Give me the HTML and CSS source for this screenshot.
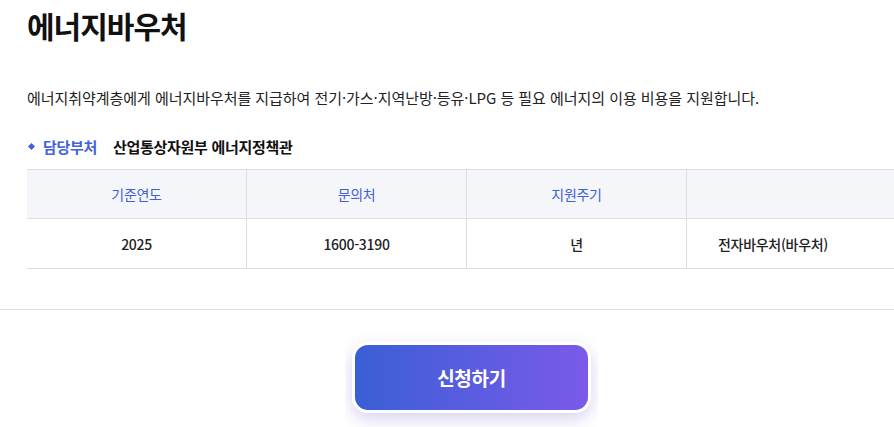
FILE: index.html
```html
<!DOCTYPE html>
<html lang="ko">
<head>
    <meta charset="UTF-8">
    <meta name="viewport" content="width=device-width, initial-scale=1.0">
    <title>에너지바우처</title>
    <link rel="stylesheet" href="styles.css">
</head>
<body>
<div class="page">
    <div class="content">
        <h1 class="title">에너지바우처</h1>

        <p class="desc">에너지취약계층에게 에너지바우처를 지급하여 전기·가스·지역난방·등유·LPG 등 필요 에너지의 이용 비용을 지원합니다.</p>

        <div class="dept">
            <span class="dept-label">담당부처</span>
            <span class="dept-name">산업통상자원부 에너지정책관</span>
        </div>

        <!-- 요약 표 -->
        <table class="info-table">
            <thead>
                <tr>
                    <th class="first">기준연도</th>
                    <th>문의처</th>
                    <th>지원주기</th>
                    <th></th>
                </tr>
            </thead>
            <tbody>
                <tr>
                    <td>2025</td>
                    <td>1600-3190</td>
                    <td>년</td>
                    <td class="left">전자바우처(바우처)</td>
                </tr>
            </tbody>
        </table>
    </div>

    <div class="apply">
        <div class="apply-clip">
            <button class="apply-button">신청하기</button>
        </div>
    </div>
</div>
</body>
</html>
```

FILE: styles.css
```css
body {
    margin: 0;
    font-family: "Noto Sans CJK KR", "Noto Sans", sans-serif;
    color: #111;
    background-color: #fff;
    overflow: hidden;
}

.page {
    width: 943px;
}

.content {
    padding: 0 0 40px 27px;
    border-bottom: 1px solid #dedede;
}

.title {
    margin: 0;
    padding-top: 4px;
    font-size: 30px;
    font-weight: 700;
    line-height: 42px;
    letter-spacing: -1px;
}

.desc {
    margin: 40px 0 0;
    font-size: 15px;
    line-height: 24px;
    color: #222;
    letter-spacing: -0.05px;
}

.dept {
    display: flex;
    align-items: center;
    margin-top: 24px;
    height: 24px;
    font-size: 15px;
    font-weight: 700;
    letter-spacing: -0.3px;
}

/* 파란 마름모 */
.dept-label {
    display: flex;
    align-items: center;
    color: #4261dc;
    width: 86px;
}

.dept-label::before {
    content: "";
    width: 5px;
    height: 5px;
    background-color: #4261dc;
    transform: rotate(45deg);
    margin: 0 9px 0 2px;
}

.dept-name {
    color: #111;
}

.info-table {
    margin-top: 11px;
    border-collapse: collapse;
    table-layout: fixed;
    width: 877px;
    font-size: 14px;
    letter-spacing: -0.3px;
}

.info-table th,
.info-table td {
    width: 219px;
    padding: 0;
    text-align: center;
    border-right: 1px solid #dedede;
}

.info-table th:last-child,
.info-table td:last-child {
    border-right: none;
}

.info-table th {
    height: 48px;
    background-color: #f5f6fa;
    color: #3f5ed8;
    font-weight: 400;
    border-top: 1px solid #dedede;
    border-bottom: 1px solid #dedede;
}

.info-table td {
    height: 49px;
    color: #222;
    font-weight: 500;
    border-bottom: 1px solid #dedede;
}

.info-table td.left {
    text-align: left;
    padding-left: 31px;
}

.apply {
    display: flex;
    justify-content: center;
    padding-top: 23px;
}

.apply-clip {
    padding: 9px 7px 20px;
    overflow: hidden;
}

.apply-button {
    width: 239px;
    height: 71px;
    border: 3px solid #fff;
    border-radius: 16px;
    background: linear-gradient(90deg, #3a5fd5, #7a5ae9);
    color: #fff;
    font-family: inherit;
    font-size: 19px;
    font-weight: 700;
    letter-spacing: -0.3px;
    box-shadow: 0 6px 16px rgba(90, 80, 200, 0.25);
    cursor: pointer;
}
```
